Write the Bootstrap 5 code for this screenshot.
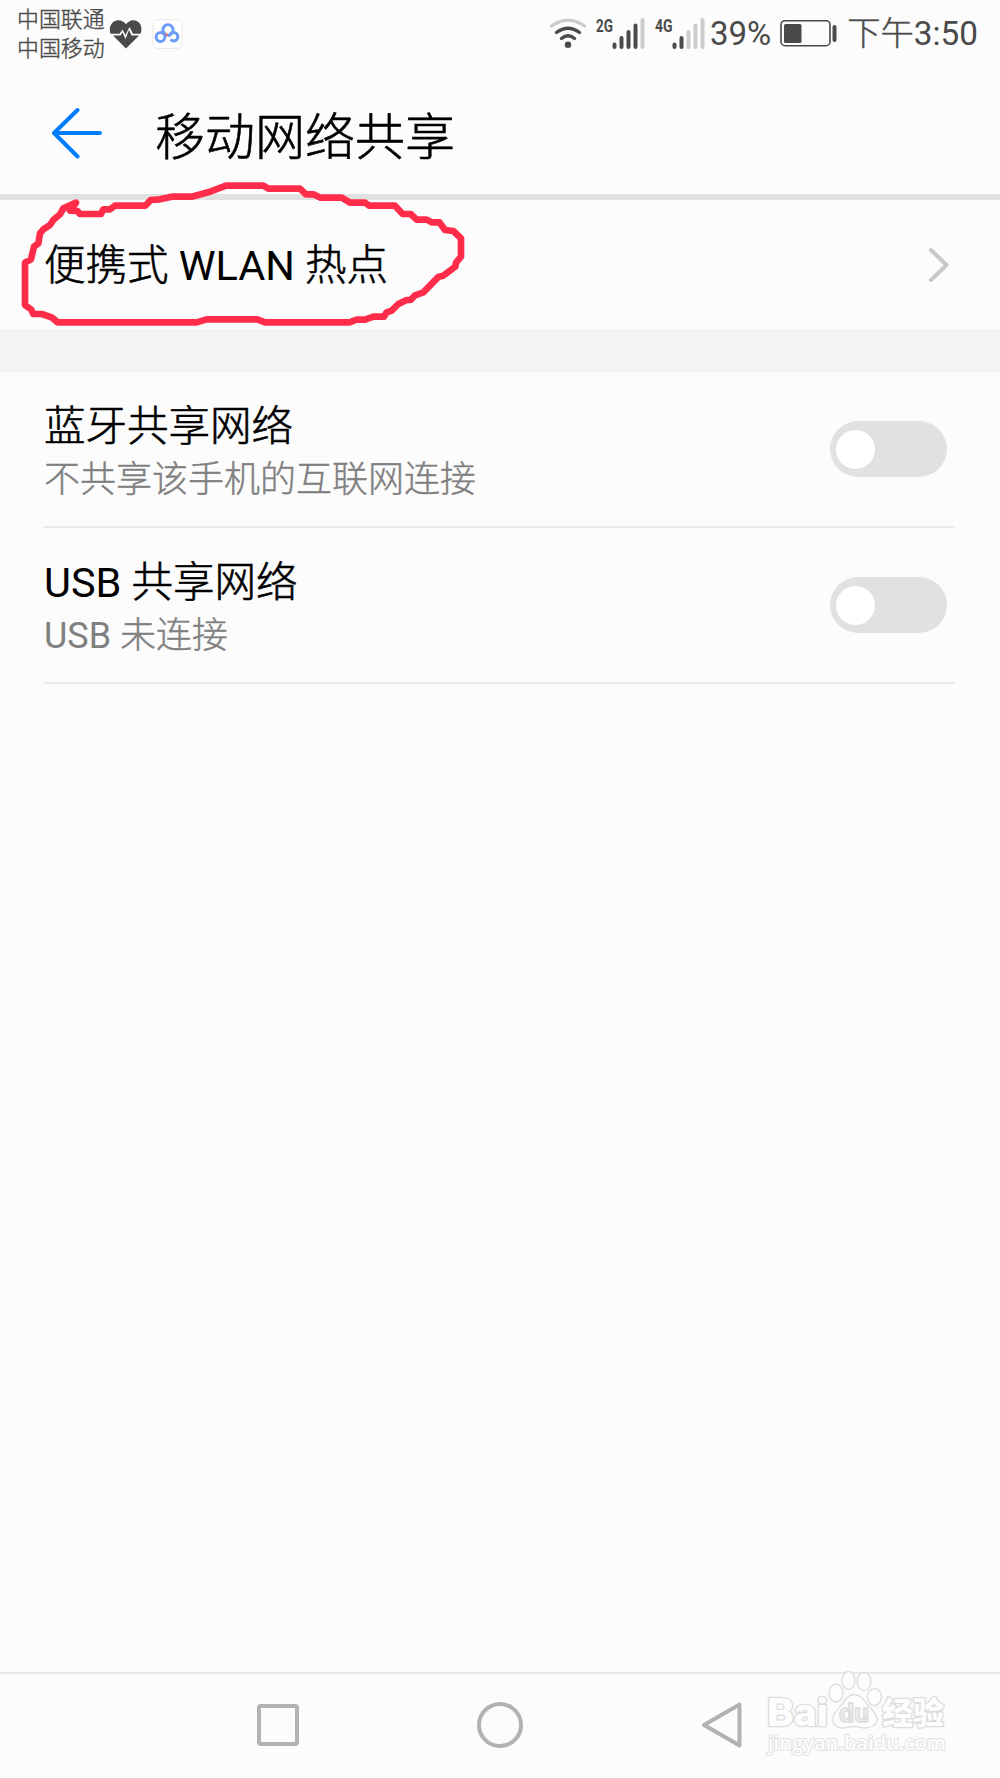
<!DOCTYPE html>
<html lang="zh-CN">
<head>
<meta charset="utf-8">
<meta name="viewport" content="width=device-width, initial-scale=1">
<title>移动网络共享</title>
<link href="https://cdn.jsdelivr.net/npm/bootstrap@5.3.0/dist/css/bootstrap.min.css" rel="stylesheet">
<style>
body { background: #fcfcfc; color: #000; font-family: Roboto, "Noto Sans CJK SC", sans-serif; width: 1000px; height: 1778px; overflow: hidden; }
svg { display: block; flex: none; }
.hans { font-weight: 300; -webkit-text-stroke: .6px currentColor; }
.hans b { font-weight: 400; -webkit-text-stroke: 0; }
.statusbar { height: 68px; color: #4a4a4a; padding: 0 22px 0 17px; }
.carriers { font-size: 21.9px; line-height: 29px; white-space: nowrap; }
.carriers.hans, .clock.hans { -webkit-text-stroke-width: .4px; }
.pct { font-size: 33px; line-height: 68px; }
.power { margin-left: 7px; }
.clock { font-size: 33.3px; line-height: 68px; margin-left: 10px; white-space: nowrap; }
.titlebar { height: 132px; border-bottom: 6px solid #e1e1e1; padding: 4px 0 0 51px; }
.titlebar h1 { font-size: 50px; line-height: 60px; margin: 0 0 0 52px; padding-top: 9px; }
.entry { height: 129px; padding: 0 51px 0 44px; }
.entry > .entry-name { padding-top: 3px; }
.entry-name { font-size: 41.5px; line-height: 50px; }
.band { height: 43px; background: #f3f3f3; }
.setting { height: 156px; margin: 0 45px 0 44px; border-bottom: 2px solid #e9e9e9; padding-right: 8px; }
.setting-text { padding-top: 7px; }
.setting-note { font-size: 36px; line-height: 46px; color: #808080; margin-top: 5px; }
.setting-note.hans { -webkit-text-stroke-width: .4px; }
.toggle { width: 117px; height: 56px; border-radius: 28px; background: #e1e1e1; padding-left: 6px; }
.toggle i { width: 39px; height: 39px; border-radius: 50%; background: #fff; }
.navkeys { height: 106px; border-top: 2px solid #e8e8e8; padding: 0 257px 2px 257px; }
.overlay-ring { left: 0; top: 160px; }
.overlay-brand { left: 760px; top: 1665px; }
</style>
<script src="https://cdn.jsdelivr.net/npm/bootstrap@5.3.0/dist/js/bootstrap.bundle.min.js"></script>
</head>
<body class="d-flex flex-column position-relative">
<header class="statusbar d-flex align-items-center justify-content-between">
  <div class="d-flex align-items-center">
    <div class="carriers hans"><div>中国联通</div><div>中国移动</div></div>
    <svg class="ms-1" width="34" height="34" viewBox="0 0 34 34"><path d="M17 31.500L4 18.500H11.500L13.500 15.500L16.500 22L20 13L22.500 18.500H30Z" fill="#4a4a4a"/><path d="M1.500 16.700C-1 9 4 2.800 9.500 3.200Q14 3.500 17 7.200Q20 3.500 24 3.200C30 2.800 34.500 9 31.500 16.700H24L20.500 10L16.500 18L13.500 12.500L10.500 16.700Z" fill="#4a4a4a"/></svg>
    <svg class="ms-2" width="34" height="34" viewBox="0 0 34 34"><rect x="2" y="2.500" width="29" height="29" rx="5" fill="#fff" stroke="#e9e9e9"/><path d="M13 14.500L18 18L13 21.500Q14 18 11 16.500Z" fill="#f0604f"/><g fill="none" stroke-width="3" stroke="#6b9cf8" stroke-linecap="round"><path d="M12.800 15.500A5 5 0 1 1 20.500 16.300L18 18.500"/><circle cx="9.500" cy="20" r="4.400"/><path d="M18.500 18Q23 13.500 26 17.300C28.500 21 25 25.300 20.500 23.300"/></g></svg>
  </div>
  <div class="d-flex align-items-center">
    <svg width="38" height="68" viewBox="549 0 38 68" fill="none" stroke-width="3.300" stroke-linecap="round"><path d="M551.500 26Q568 14.500 584.500 26" stroke="#ccc"/><path d="M556.500 32.500Q568 24 579.500 32.500M561.500 38.500Q568 33 574.500 38.500" stroke="#4a4a4a"/><circle cx="568" cy="44.800" r="3.200" fill="#4a4a4a" stroke="none"/></svg>
    <svg width="123" height="68" viewBox="587 0 123 68" stroke-width="4" stroke-linecap="round" font-family="Roboto" font-weight="700" font-size="19"><g fill="#4a4a4a" stroke="none"><text x="596" y="32" textLength="17" lengthAdjust="spacingAndGlyphs">2G</text><text x="655" y="32" textLength="17.500" lengthAdjust="spacingAndGlyphs">4G</text></g><path stroke="#4a4a4a" d="M614.500 44.500V47M621.500 38V47M628.500 32V47M635.500 25.500V47M674.500 44.500V47M681.500 38V47"/><path stroke="#ccc" d="M642.500 20V47M688.500 32V47M695.500 25.500V47M702.500 20V47"/></svg>
    <span class="pct">39%</span>
    <svg class="power" width="59" height="68" viewBox="778 0 59 68"><rect x="781" y="20.700" width="49" height="25" rx="4" fill="none" stroke="#4a4a4a" stroke-width="1.600"/><rect x="784" y="24" width="17.500" height="19" rx="1.500" fill="#4a4a4a"/><rect x="832.500" y="25" width="4" height="17" rx="2" fill="#4a4a4a"/></svg>
    <span class="clock hans">下午<b>3:50</b></span>
  </div>
</header>
<div class="titlebar d-flex align-items-center">
  <svg width="52" height="52" viewBox="51 107 52 52" fill="none" stroke="#007dff" stroke-width="4" stroke-linecap="round" stroke-linejoin="round"><path d="M77.500 110L54 133L77.500 156.500M54 133H100"/></svg>
  <h1 class="hans">移动网络共享</h1>
</div>
<main class="flex-grow-1">
  <div class="entry d-flex align-items-center justify-content-between">
    <span class="entry-name hans">便携式 <b>WLAN</b> 热点</span>
    <svg width="21" height="38" viewBox="928 245 21 38" fill="none" stroke="#c8c8c8" stroke-width="4" stroke-linecap="round" stroke-linejoin="round"><path d="M931 249L946.500 264L931 279"/></svg>
  </div>
  <div class="band"></div>
  <div class="setting d-flex align-items-center justify-content-between">
    <div class="setting-text"><div class="entry-name hans">蓝牙共享网络</div><div class="setting-note hans">不共享该手机的互联网连接</div></div>
    <div class="toggle d-flex align-items-center"><i></i></div>
  </div>
  <div class="setting d-flex align-items-center justify-content-between">
    <div class="setting-text"><div class="entry-name hans"><b>USB</b> 共享网络</div><div class="setting-note hans"><b>USB</b> 未连接</div></div>
    <div class="toggle d-flex align-items-center"><i></i></div>
  </div>
</main>
<nav class="navkeys d-flex align-items-center justify-content-between">
  <svg width="42" height="46"><rect x="2" y="4" width="38" height="38" rx="2" fill="none" stroke="#b2b2b2" stroke-width="4"/></svg>
  <svg width="46" height="46"><circle cx="23" cy="23" r="21" fill="none" stroke="#b2b2b2" stroke-width="4"/></svg>
  <svg width="42" height="50" viewBox="701 1700 42 50"><path d="M704 1725L739.500 1704.500V1745.500Z" fill="none" stroke="#b2b2b2" stroke-width="4" stroke-linejoin="round"/></svg>
</nav>
<svg class="overlay-ring position-absolute" width="480" height="180" viewBox="0 240 1440 540" fill="none" stroke="#ff2d49" stroke-width="20" stroke-linejoin="round" stroke-linecap="round"><path d="M228 368L210 392L232 393L240 402H303L310 388H330L345 377H436L452 360L480 358L515 350H575L630 335L678 317H790L805 326H900L918 343H940L962 353H1025L1050 368H1095L1107 377H1185L1208 402H1232L1250 419H1280L1295 427H1318L1335 450L1360 453L1383 475V530L1368 548L1366 560L1330 587L1316 590L1270 637L1245 646L1232 660H1220L1195 672L1175 692L1160 697L1152 710H1120L1095 719H1070L1048 727H795L772 718H620L590 727H173L155 712L125 702H100L93 688L75 675V548L93 538L102 500L115 490L120 460L130 448L150 435L160 420L180 403L190 385L205 378Z"/></svg>
<svg class="overlay-brand position-absolute" width="200" height="100" viewBox="760 1665 200 100" fill="#fdfdfd" stroke="#dcdcdc" stroke-width="1.300" font-family="Roboto, 'Noto Sans CJK SC', sans-serif">
  <g paint-order="stroke" stroke-width="2.600" stroke-linejoin="round">
    <text x="767" y="1726" font-size="39" font-weight="900" textLength="61" lengthAdjust="spacingAndGlyphs">Bai</text>
    <text x="882" y="1724" font-size="31" font-weight="900" textLength="62" lengthAdjust="spacingAndGlyphs">经验</text>
    <text x="768" y="1750" font-size="20" font-family="'Open Sans', sans-serif" font-weight="600" stroke-width="2" stroke="#e2e2e2" textLength="178" lengthAdjust="spacingAndGlyphs">jingyan.baidu.com</text>
  </g>
  <ellipse cx="836" cy="1693" rx="7" ry="9"/><ellipse cx="848.500" cy="1680.500" rx="6.500" ry="9"/><ellipse cx="864" cy="1681.500" rx="7" ry="9"/><ellipse cx="874.500" cy="1697" rx="7" ry="8.500"/>
  <path d="M854 1694.500C860 1694.500 864 1699 867 1704C871 1709 877 1713 877 1720C876 1727 870 1728 864 1728C857 1726 851 1726 844 1728C836 1728 832 1724 833 1718C834 1711 840 1708 843 1703C846 1698 849 1694.500 854 1694.500Z"/>
  <text x="839" y="1722" font-size="25" font-weight="700" fill="#eee" textLength="30" lengthAdjust="spacingAndGlyphs">du</text>
</svg>
</body>
</html>
